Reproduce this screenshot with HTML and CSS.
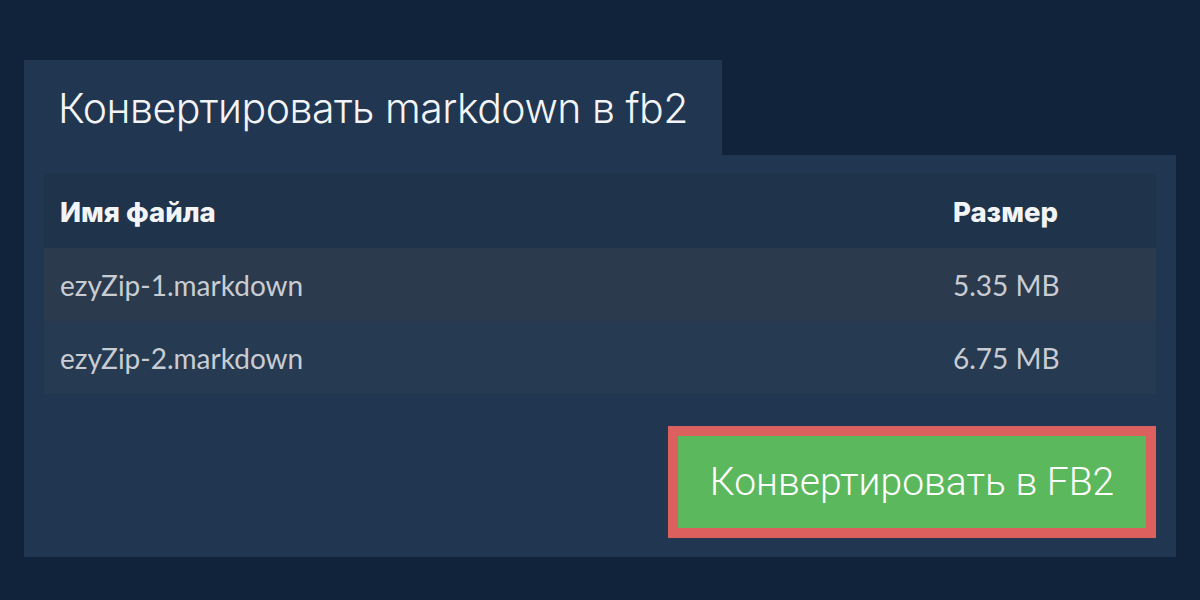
FILE: index.html
```html
<!DOCTYPE html>
<html lang="ru">
<head>
<meta charset="utf-8">
<link rel="stylesheet" href="styles.css">
</head>
<body>
<main class="page">
  <div class="tab"><h1 class="title">Конвертировать markdown в fb2</h1></div>
  <section class="panel">
    <div class="table">
      <div class="row head"><span class="name">Имя файла</span><span class="size">Размер</span></div>
      <div class="row odd"><span class="name">ezyZip-1.markdown</span><span class="size">5.35 MB</span></div>
      <div class="row even"><span class="name">ezyZip-2.markdown</span><span class="size">6.75 MB</span></div>
    </div>
    <div class="actions">
      <button class="convert">Конвертировать в FB2</button>
    </div>
  </section>
</main>
</body>
</html>
```

FILE: styles.css
```css
html, body {
  margin: 0;
  padding: 0;
  background: #10233a;
  width: 1200px;
  height: 600px;
  overflow: hidden;
}
.page {
  padding: 60px 24px 0 24px;
  display: flex;
  flex-direction: column;
  align-items: flex-start;
}
.tab {
  background: #213650;
  width: 698px;
  height: 95px;
  box-sizing: border-box;
  padding-left: 34px;
  display: flex;
  align-items: center;
}
.title {
  margin: 0;
  font-family: Inter, "Noto Sans", sans-serif;
  font-weight: 300;
  font-size: 41px;
  color: #f2f4f6;
  letter-spacing: -0.5px;
  white-space: nowrap;
}
.panel {
  align-self: stretch;
  background: #213650;
  padding: 19px 20px 19px 20px;
  display: flex;
  flex-direction: column;
}
.table {
  font-family: Lato, "Noto Sans", sans-serif;
  font-size: 28px;
}
.row {
  display: flex;
  align-items: center;
  padding: 0 16px;
  height: 73px;
}
.row.head {
  height: 74px;
  background: #1f334b;
  color: #f3f4f6;
}
.row.head span {
  font-family: Inter, Lato, "Noto Sans", sans-serif;
  font-weight: 800;
  font-size: 27.5px;
  padding-top: 2px;
}
.row.odd { background: #2b3b4d; color: #c9cdd3; }
.row.even { background: #263a52; color: #c9cdd3; }
.name { flex: 1; }
.size { width: 187px; }
.actions {
  display: flex;
  justify-content: flex-end;
  margin-top: 32px;
}
.convert {
  background: #5cb85c;
  border: 10px solid #dc605d;
  color: #ffffff;
  font-family: Roboto, "Noto Sans", sans-serif;
  font-weight: 300;
  font-size: 39px;
  width: 488px;
  height: 112px;
  padding: 0;
  margin: 0;
  cursor: pointer;
}
```
